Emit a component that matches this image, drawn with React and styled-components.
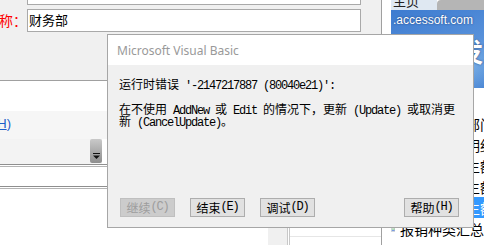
import React from "react";
import styled, { createGlobalStyle } from "styled-components";

const GlobalStyle = createGlobalStyle`
  html, body {
    margin: 0;
    padding: 0;
    background: #fff;
  }
  body {
    width: 484px;
    height: 245px;
    overflow: hidden;
    font-family: "Noto Sans CJK SC", "Noto Sans", sans-serif;
  }
`;

const Screen = styled.div`
  position: relative;
  width: 484px;
  height: 245px;
  overflow: hidden;
  display: flex;
  background: #fff;
`;

/* ---------- left: form + sheet ---------- */
const LeftPane = styled.div`
  width: 381px;
  flex: 0 0 381px;
  border-right: 1px solid #a0a0a0;
  display: flex;
  flex-direction: column;
`;

const Form = styled.div`
  height: 81px;
  flex: 0 0 81px;
  box-sizing: border-box;
  background: #f0f0f0;
  border-bottom: 1px solid #a0a0a0;
  padding-right: 20px;
  display: flex;
  flex-direction: column;
  gap: 4px;
  overflow: hidden;
`;

const FieldRow = styled.div`
  display: flex;
  align-items: center;
  margin-top: ${p => (p.$first ? "-18px" : "0")};
`;

const Label = styled.div`
  width: 27px;
  flex: 0 0 27px;
  display: flex;
  justify-content: flex-end;
  overflow: hidden;
  white-space: nowrap;
  color: #f00;
  font-size: 14px;
  line-height: 23px;
`;

const Input = styled.div`
  flex: 1;
  height: 23px;
  box-sizing: border-box;
  border: 1px solid #a9a9a9;
  background: #fff;
  padding-left: 1px;
  font-size: 13px;
  line-height: 20px;
  color: #000;
`;

const Blank = styled.div`
  height: ${p => p.$h}px;
  flex: 0 0 ${p => p.$h}px;
  background: ${p => p.$bg || "#fff"};
`;

const LinkRow = styled.div`
  height: 28px;
  flex: 0 0 28px;
  background: #f6f6f6;
  display: flex;
  align-items: center;
`;

const Cut = styled.div`
  width: 11px;
  display: flex;
  justify-content: flex-end;
  overflow: hidden;
  white-space: nowrap;
  color: #1c5fc8;
  font-family: "Liberation Sans", sans-serif;
  font-size: 13px;
  u {
    text-decoration-thickness: 1px;
  }
`;

const ComboRow = styled.div`
  height: 25px;
  flex: 0 0 25px;
  display: flex;
`;

const Combo = styled.div`
  width: 102px;
  background: #f3f3f3;
  display: flex;
  justify-content: flex-end;
  align-items: flex-start;
`;

const DropButton = styled.div`
  width: 12px;
  height: 24px;
  border-radius: 2px;
  background: linear-gradient(#c9c9c9, #8e8e8e);
  display: flex;
  align-items: flex-end;
  justify-content: center;
  padding-bottom: 4px;
  box-sizing: border-box;
`;

const Rule = styled.div`
  height: 1px;
  flex: 0 0 1px;
  border-top: 1px solid #8f8f8f;
  border-bottom: 1px solid #b4b4b4;
`;

const Sheet = styled.div`
  flex: 1;
  display: flex;
`;

const SheetCell = styled.div`
  width: ${p => p.$w}px;
  flex: 0 0 ${p => p.$w}px;
  background: ${p => p.$bg || "#fff"};
`;

const Rails = styled.div`
  width: 1px;
  flex: 0 0 1px;
  border-left: 1px solid #c8c8c8;
  border-right: 1px solid #c8c8c8;
`;

const SheetFill = styled.div`
  flex: 1;
  display: flex;
  flex-direction: column;
  justify-content: flex-end;
  padding-bottom: 8px;
`;

const FaintLine = styled.div`
  height: 1px;
  background: #e6e6e6;
`;

/* ---------- right: nav panel ---------- */
const RightPane = styled.div`
  flex: 1;
  display: flex;
  flex-direction: column;
  overflow: hidden;
`;

const TabStrip = styled.div`
  height: 10px;
  flex: 0 0 10px;
  display: flex;
  padding-left: 9px;
  overflow: hidden;
`;

const Tab = styled.div`
  width: ${p => p.$w}px;
  flex: 0 0 ${p => p.$w}px;
  background: ${p => p.$bg};
  border-top-left-radius: ${p => (p.$round ? "4px" : "0")};
  overflow: hidden;
  font-size: 13px;
  line-height: 13px;
  color: #222;
  span {
    display: block;
    margin-top: -6px;
    padding-left: 2px;
  }
`;

const Banner = styled.div`
  height: 78px;
  flex: 0 0 78px;
  margin-left: 9px;
  background:
    radial-gradient(circle at 85% 70%, rgba(150, 200, 240, 0.55), transparent 30%),
    radial-gradient(circle at 20% 80%, rgba(120, 170, 230, 0.5), transparent 35%),
    linear-gradient(160deg, #3d7bd0, #5a93db 60%, #4a86d4);
  overflow: hidden;
  display: flex;
  flex-direction: column;
  color: #fff;
`;

const Site = styled.div`
  font-family: "Liberation Sans", sans-serif;
  font-size: 12px;
  line-height: 14px;
  margin-top: 3px;
  padding-left: 2px;
  white-space: nowrap;
  text-shadow: 0 0 2px #1d3f78;
`;

const BigWord = styled.div`
  margin-top: 10px;
  padding-left: 40px;
  font-size: 26px;
  font-weight: 700;
  line-height: 28px;
  white-space: nowrap;
  text-shadow: 0 0 2px #1d3f78;
`;

const NavList = styled.div`
  padding-top: 4px;
  display: flex;
  flex-direction: column;
`;

const NavItem = styled.div`
  height: 21px;
  display: flex;
  align-items: center;
  gap: 5px;
  padding-left: 9px;
  font-size: 14px;
  white-space: nowrap;
  color: ${p => (p.$active ? "#fff" : "#000")};
  background: ${p => (p.$active ? "#3399ff" : "transparent")};
`;

/* ---------- dialog ---------- */
const Dialog = styled.div`
  position: absolute;
  left: 107px;
  top: 34px;
  width: 367px;
  height: 194px;
  box-sizing: border-box;
  border: 1px solid #a6a6a6;
  background: #f0f0f0;
  display: flex;
  flex-direction: column;
`;

const TitleBar = styled.div`
  height: 30px;
  flex: 0 0 30px;
  background: #fff;
  display: flex;
  align-items: center;
  padding-left: 9px;
  font-family: "Noto Sans", sans-serif;
  font-size: 12px;
  color: #999;
`;

const Body = styled.div`
  flex: 1;
  display: flex;
  flex-direction: column;
  padding: 12px 14px 10px 11px;
  font-size: 12px;
  color: #000;
`;

const Line = styled.div`
  white-space: pre;
  height: ${p => p.$lh || 14}px;
  line-height: ${p => p.$lh || 14}px;
  margin-bottom: ${p => p.$mb || 0}px;
`;

const Latin = styled.span`
  font-family: "Liberation Mono", monospace;
  font-size: 12px;
  letter-spacing: -1.2px;
`;

const Buttons = styled.div`
  margin-top: auto;
  padding-left: 1px;
  display: flex;
  gap: 15px;
`;

const Button = styled.div`
  width: 55px;
  height: 19px;
  box-sizing: border-box;
  margin-left: ${p => (p.$push ? "auto" : "0")};
  border: 1px solid ${p => (p.$disabled ? "#bfbfbf" : "#adadad")};
  background: ${p => (p.$disabled ? "#cccccc" : "#e1e1e1")};
  color: ${p => (p.$disabled ? "#9d9d9d" : "#000")};
  display: flex;
  align-items: center;
  justify-content: center;
  font-size: 12px;
  line-height: 17px;
  white-space: pre;
`;

const DropArrow = () => (
  <svg width="7" height="6" viewBox="0 0 7 6">
    <rect x="0" y="0" width="7" height="1" fill="#111" />
    <path d="M0 2.5 H7 L3.5 6 Z" fill="#111" />
  </svg>
);

const ReportIcon = () => (
  <svg width="9" height="15" viewBox="0 0 9 15">
    <rect x="0.5" y="0.5" width="8" height="14" fill="#fff" stroke="#9aa4b0" />
    <rect x="2" y="2" width="6" height="1.5" fill="#e2403a" />
    <rect x="2" y="5" width="6" height="1.5" fill="#f09030" />
    <rect x="2" y="8" width="6" height="1.5" fill="#2fa84f" />
    <rect x="2" y="11" width="6" height="1.5" fill="#3568d4" />
  </svg>
);

const navItems = [
  { text: "报表" },
  { text: "报销单按照部门" },
  { text: "报销按日期明细" },
  { text: "报销费用发生额" },
  { text: "部门费用发生额" },
  { text: "人员费用发生额", active: true },
  { text: "报销种类汇总" }
];

const App = () => {
  return (
    <>
      <GlobalStyle />
      <Screen>
        <LeftPane>
          <Form>
            <FieldRow $first>
              <Label />
              <Input />
            </FieldRow>
            <FieldRow>
              <Label>名称：</Label>
              <Input>财务部</Input>
            </FieldRow>
          </Form>
          <Blank $h={30} />
          <LinkRow>
            <Cut>
              帮助(<u>H</u>)
            </Cut>
          </LinkRow>
          <ComboRow>
            <Combo>
              <DropButton>
                <DropArrow />
              </DropButton>
            </Combo>
          </ComboRow>
          <Rule />
          <Blank $h={19} />
          <Rule />
          <Sheet>
            <SheetCell $w={268} />
            <SheetCell $w={19} $bg="#f0f0f0" />
            <Rails />
            <SheetFill>
              <FaintLine />
            </SheetFill>
          </Sheet>
        </LeftPane>

        <RightPane>
          <TabStrip>
            <Tab $w={46} $bg="#dfe8f2">
              <span>主页</span>
            </Tab>
            <Tab $w={50} $bg="#b5b5b5" $round />
          </TabStrip>
          <Banner>
            <Site>.accessoft.com</Site>
            <BigWord>开发方</BigWord>
          </Banner>
          <NavList>
            {navItems.map(item => (
              <NavItem key={item.text} $active={item.active}>
                <ReportIcon />
                {item.text}
              </NavItem>
            ))}
          </NavList>
        </RightPane>

        <Dialog>
          <TitleBar>Microsoft Visual Basic</TitleBar>
          <Body>
            <Line $mb={12}>
              运行时错误<Latin> '-2147217887 (80040e21)':</Latin>
            </Line>
            <Line $lh={12}>
              在不使用<Latin> AddNew </Latin>或<Latin> Edit </Latin>的情况下，更新
              <Latin> (Update) </Latin>或取消更
            </Line>
            <Line $lh={12}>
              新<Latin> (CancelUpdate)</Latin>。
            </Line>
            <Buttons>
              <Button $disabled>
                继续<Latin>(C)</Latin>
              </Button>
              <Button>
                结束<Latin>(E)</Latin>
              </Button>
              <Button>
                调试<Latin>(D)</Latin>
              </Button>
              <Button $push>
                帮助<Latin>(H)</Latin>
              </Button>
            </Buttons>
          </Body>
        </Dialog>
      </Screen>
    </>
  );
};

export default App;
